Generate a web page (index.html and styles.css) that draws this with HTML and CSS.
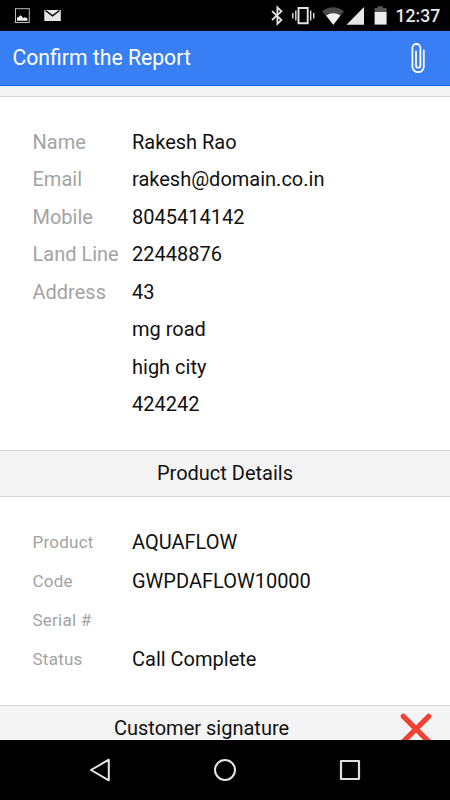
FILE: index.html
```html
<!DOCTYPE html>
<html lang="en">
<head>
<meta charset="utf-8">
<title>Confirm the Report</title>
<link rel="stylesheet" href="styles.css">
</head>
<body>
<div class="screen">
  <div class="status">
    <svg class="status-icons" width="386" height="31" viewBox="0 0 386 31">
      <rect x="15.5" y="8.7" width="13.8" height="13.8" fill="none" stroke="#bdbdbd"/>
      <path d="M17 20.8v-3l2-1 1.500-1.500 1.500 1.200 1 1.500 2-.8 2.500 1.300v2.300z" fill="#f2f2f2"/>
      <path d="M44.300 10h16.500v11H44.300z" fill="#e6e6e6"/>
      <path d="M45.500 10.500l7 5.300 7-5.300" fill="none" stroke="#000" stroke-width="1.400"/>
      <path d="M272 11.200l9.400 8.800-4 3.900V7.400l4 3.900L272 20" fill="none" stroke="#e4e4e4" stroke-width="1.800"/>
      <path d="M298.500 8h9.200v15.300h-9.200z" fill="none" stroke="#e4e4e4" stroke-width="1.900"/>
      <path d="M295.800 10.500v10M310.700 10.500v10M292.800 13v5.500M313.700 13v5.500" stroke="#dcdcdc" stroke-width="1.400"/>
      <path d="M322 11.300Q333 3 344 11.300L333.300 25z" fill="#4a4a4a"/>
      <path d="M326.200 15.600Q333.300 11 340.400 15.600L333.300 24.700z" fill="#f2f2f2"/>
      <path d="M364 7v17.700h-17.500z" fill="#e6e6e6"/>
      <path d="M377.500 6.300h5.500v1.700h3.600v4h-12V8h2.900z" fill="#555"/>
      <path d="M374.600 12h12v12.600h-12z" fill="#ededed"/>
    </svg>
    <span class="clock">12:37</span>
  </div>
  <header class="appbar">
    <h1>Confirm the Report</h1>
    <svg class="clip" width="16" height="32" viewBox="0 0 16 32">
      <path d="M13.800 8.500v16a5.700 5.700 0 0 1-11.400 0V6a4 4 0 0 1 8 0v17.500a2.200 2.200 0 0 1-4.400 0V9.500" fill="none" stroke="#fff" stroke-width="1.800" stroke-linecap="round"/>
    </svg>
  </header>
  <main class="content">
    <div class="strip"></div>
    <dl class="details contact">
      <dt>Name</dt><dd>Rakesh Rao</dd>
      <dt>Email</dt><dd>rakesh@domain.co.in</dd>
      <dt>Mobile</dt><dd>8045414142</dd>
      <dt>Land Line</dt><dd>22448876</dd>
      <dt>Address</dt><dd>43<br>mg road<br>high city<br>424242</dd>
    </dl>
    <h2 class="section">Product Details</h2>
    <dl class="details product">
      <dt>Product</dt><dd>AQUAFLOW</dd>
      <dt>Code</dt><dd>GWPDAFLOW10000</dd>
      <dt>Serial #</dt><dd></dd>
      <dt>Status</dt><dd>Call Complete</dd>
    </dl>
    <div class="section signature">
      <h2>Customer signature</h2>
      <svg class="cross" width="32" height="32" viewBox="0 0 32 32">
        <path d="M3.300 3.300l25.400 25.400M28.700 3.300L3.300 28.700" stroke="#f04134" stroke-width="5.200" stroke-linecap="round"/>
      </svg>
    </div>
  </main>
  <nav class="navbar">
    <svg width="24" height="26" viewBox="0 0 24 26"><path d="M20.800 2.700v20.600L3 13z" fill="none" stroke="#e6e6e6" stroke-width="2" stroke-linejoin="round"/></svg>
    <svg width="24" height="26" viewBox="0 0 24 26"><circle cx="12" cy="13" r="10" fill="none" stroke="#e6e6e6" stroke-width="2"/></svg>
    <svg width="24" height="26" viewBox="0 0 24 26"><rect x="3" y="4" width="18" height="18" fill="none" stroke="#dedede" stroke-width="2.200" stroke-linejoin="round"/></svg>
  </nav>
</div>
</body>
</html>
```
FILE: styles.css
```css
* { box-sizing: border-box; }
body { margin: 0; font-family: Roboto, "Liberation Sans", sans-serif; }
h1, h2, dl, dd { margin: 0; font-weight: 400; }
svg { display: block; overflow: visible; }

.screen {
  display: flex;
  flex-direction: column;
  width: 450px;
  height: 800px;
  overflow: hidden;
  background: #fff;
  color: #111;
}

.status {
  display: flex;
  height: 31px;
  background: #000;
}
.clock {
  padding-left: 9.500px;
  color: #e8e8e8;
  font-size: 17.600px;
  font-weight: 500;
  line-height: 32px;
}

.appbar {
  display: flex;
  align-items: center;
  justify-content: space-between;
  height: 55px;
  padding: 0 24px 0 12.500px;
  background: #387ef5;
  border-bottom: 1px solid #0c63ee;
  color: #fff;
}
.appbar h1 { font-size: 21.200px; line-height: 54px; }

.content {
  flex: 1;
  min-height: 0;
  overflow: hidden;
}
.strip {
  height: 11px;
  background: #f4f4f4;
  border-bottom: 1px solid #d6d6d6;
}

.details {
  display: grid;
  grid-template-columns: 99.500px 1fr;
  padding-left: 32.500px;
  font-size: 20px;
}
.details dt { color: #a3a3a3; }
.contact {
  height: 353px;
  padding-top: 26.600px;
  align-content: start;
  line-height: 37.500px;
}
.product {
  height: 208px;
  padding-top: 26px;
  grid-auto-rows: 39px;
  align-content: start;
  line-height: 39px;
}
.product dt { font-size: 17px; letter-spacing: 0.250px; }

.section {
  height: 47px;
  background: #f4f4f4;
  border-top: 1px solid #d6d6d6;
  border-bottom: 1px solid #d6d6d6;
  font-size: 20px;
  line-height: 45px;
  text-align: center;
}
.signature {
  display: flex;
  align-items: center;
  justify-content: space-between;
  padding: 0 18px 0 114px;
}
.signature h2 { font-size: 20px; }

.navbar {
  display: flex;
  justify-content: center;
  align-items: center;
  gap: 101px;
  height: 60px;
  background: #000;
}
```
